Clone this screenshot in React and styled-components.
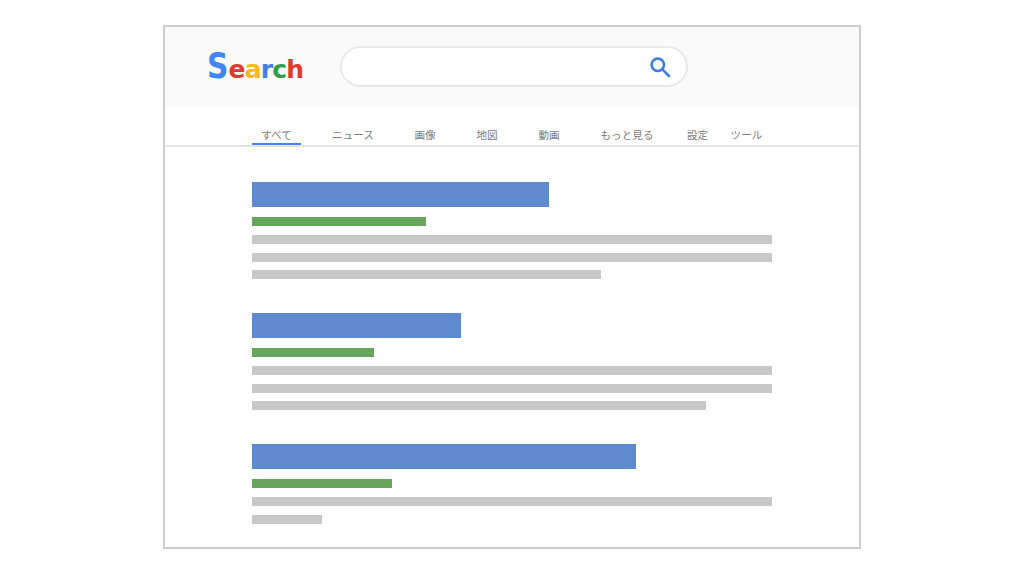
import React from 'react';
import styled, { createGlobalStyle } from 'styled-components';

const GlobalStyle = createGlobalStyle`
  html, body {
    margin: 0;
    padding: 0;
    background: #fff;
  }
`

const Page = styled.div`
  width: 1024px;
  height: 576px;
  box-sizing: border-box;
  padding: 25px 163px 27px;
  font-family: "Noto Sans CJK JP", "Noto Sans", sans-serif;
`

const Frame = styled.div`
  height: 100%;
  box-sizing: border-box;
  border: 2px solid #cdcdcd;
  background: #fff;
`

const Header = styled.div`
  height: 80px;
  box-sizing: border-box;
  padding: 19px 0 0 42px;
  background: #fafafa;
  display: flex;
  align-items: flex-start;
`

const Logo = styled.div`
  width: 133px;
  height: 41px;
  display: flex;
  align-items: baseline;
  font-family: "DejaVu Sans", sans-serif;
  font-weight: 700;
  font-size: 25px;
  line-height: 41px;
`

const Letter = styled.span`
  color: ${props => props.color};
  margin-right: -0.8px;
`

const BigLetter = styled.span`
  width: 21.5px;
  color: ${props => props.color};
  font-size: 35px;
  transform: scaleX(0.85);
  transform-origin: left center;
`

const SearchBox = styled.div`
  width: 348px;
  height: 41px;
  box-sizing: border-box;
  padding-right: 15px;
  border: 2px solid #e9e9e9;
  border-radius: 21px;
  background: #fff;
  display: flex;
  align-items: center;
  justify-content: flex-end;
`

const Nav = styled.div`
  height: 40px;
  box-sizing: border-box;
  padding-left: 87px;
  border-bottom: 2px solid #e4e4e4;
  display: flex;
`

const Tab = styled.div`
  width: ${props => props.width}px;
  margin-right: ${props => props.gap}px;
  height: 38px;
  box-sizing: border-box;
  padding-top: 20px;
  border-bottom: 2px solid ${props => props.active ? '#4285f4' : 'transparent'};
  text-align: center;
  white-space: nowrap;
  font-size: 10.6px;
  line-height: 16px;
  color: #7c7c7c;
`

const Results = styled.div`
  padding: 35px 0 0 87px;
  display: flex;
  flex-direction: column;
  gap: 25.5px;
`

const Result = styled.div`
  display: flex;
  flex-direction: column;
`

const Title = styled.div`
  width: ${props => props.width}px;
  height: 25px;
  margin-bottom: 10px;
  background: #5f8ad0;
`

const Url = styled.div`
  width: ${props => props.width}px;
  height: 9px;
  margin-bottom: 9px;
  background: #67a55c;
`

const Line = styled.div`
  width: ${props => props.width}px;
  height: 9px;
  margin-bottom: 8.5px;
  background: #c8c8c8;
`

const SearchIcon = () => (
  <svg width="22" height="22" viewBox="0 0 22 22" fill="none" stroke="#3f7de0" strokeWidth="2.6" strokeLinecap="round">
    <circle cx="8.8" cy="8.8" r="6.2" />
    <path d="M13.6 13.6L20 20" />
  </svg>
)

const tabs = [
  { label: 'すべて', width: 49, gap: 24, active: true },
  { label: 'ニュース', width: 56, gap: 26 },
  { label: '画像', width: 36, gap: 26 },
  { label: '地図', width: 36, gap: 26 },
  { label: '動画', width: 36, gap: 26 },
  { label: 'もっと見る', width: 68, gap: 18.5 },
  { label: '設定', width: 36, gap: 7 },
  { label: 'ツール', width: 48, gap: 0 },
]

const results = [
  { title: 297, url: 174, lines: [520, 520, 349] },
  { title: 209, url: 122, lines: [520, 520, 454] },
  { title: 384, url: 140, lines: [520, 70] },
]

const App = () => {
  return (
    <Page>
      <GlobalStyle />
      <Frame>
        <Header>
          <Logo>
            <BigLetter color="#4285f4">S</BigLetter>
            <Letter color="#e0392f">e</Letter>
            <Letter color="#f9bb0d">a</Letter>
            <Letter color="#3f80e8">r</Letter>
            <Letter color="#2f9e49">c</Letter>
            <Letter color="#e0392f">h</Letter>
          </Logo>
          <SearchBox>
            <SearchIcon />
          </SearchBox>
        </Header>
        <Nav>
          {tabs.map(tab => (
            <Tab key={tab.label} width={tab.width} gap={tab.gap} active={tab.active}>{tab.label}</Tab>
          ))}
        </Nav>
        <Results>
          {results.map((result, i) => (
            <Result key={i}>
              <Title width={result.title} />
              <Url width={result.url} />
              {result.lines.map((w, j) => <Line key={j} width={w} />)}
            </Result>
          ))}
        </Results>
      </Frame>
    </Page>
  )
}

export default App
